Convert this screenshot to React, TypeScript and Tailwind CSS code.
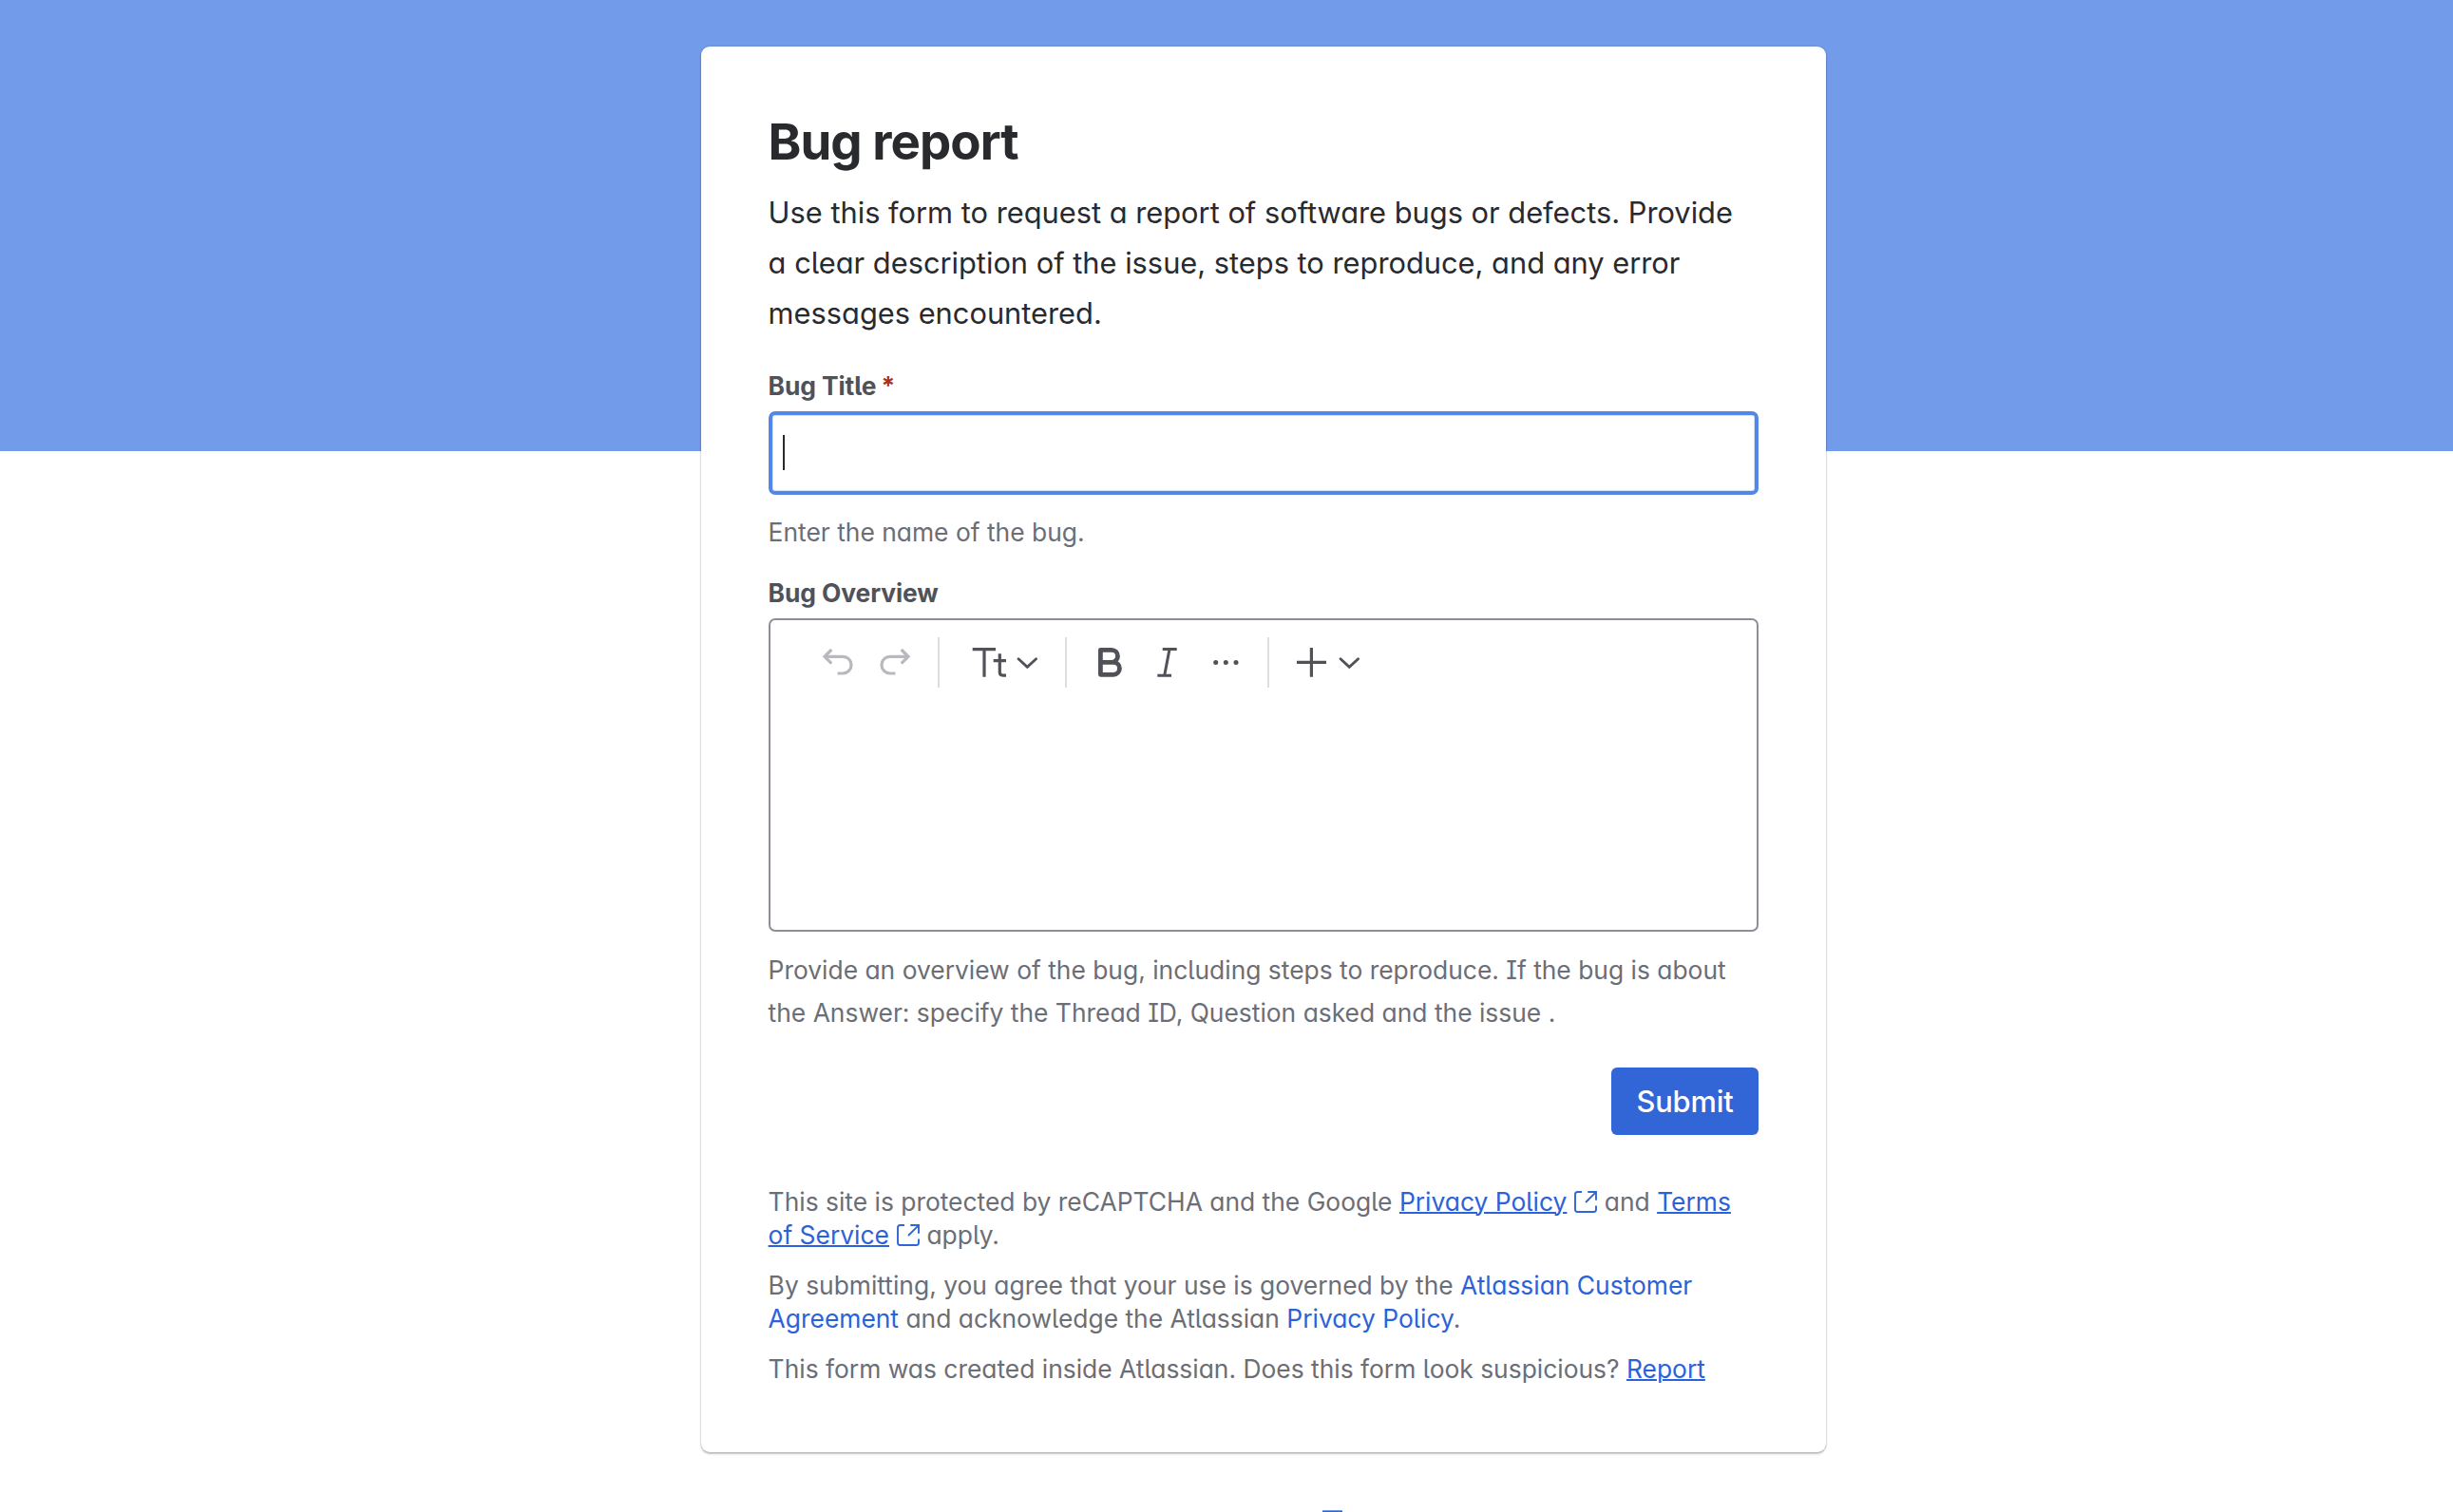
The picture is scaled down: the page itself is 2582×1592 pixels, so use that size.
import React from "react";

const ExternalIcon = () => (
  <svg viewBox="0 0 24 23" className="ml-[8px] inline-block h-[23px] w-[24px] align-[-2px]" fill="none" stroke="#2f65d6" strokeWidth="1.9">
    <path d="M8 1H3.5Q1 1 1 3.5V19.5Q1 22 3.5 22H20.5Q23 22 23 19.5V15.5M14.3 1H23V9.7M22.7 1.3L12 12" />
  </svg>
);

const Divider = () => <div className="h-[53px] w-[2px] shrink-0 bg-[#dddee1]" />;

const Chevron = () => (
  <svg viewBox="0 0 24 53" className="h-[53px] w-[24px]" fill="none" stroke="#505258" strokeWidth="2.8" strokeLinecap="round">
    <path d="M3 22.8L12.3 31.4L21.6 22.8" />
  </svg>
);

const Arrow = () => (
  <path d="M11.3 13L4 20.3L11.3 27.6M4 20.3H23.2A8.85 8.85 0 0 1 23.2 38H17.5" />
);

function Toolbar() {
  return (
    <div className="mt-[18px] flex h-[53px] items-center">
      <svg viewBox="0 0 36 53" className="ml-[53px] h-[53px] w-[36px]" fill="none" stroke="#b7b9be" strokeWidth="3.2">
        <Arrow />
      </svg>
      <svg viewBox="0 0 36 53" className="mr-[27px] ml-[24px] h-[53px] w-[36px] -scale-x-100" fill="none" stroke="#b7b9be" strokeWidth="3.2">
        <Arrow />
      </svg>
      <Divider />
      <svg viewBox="0 0 40 53" className="mr-[8px] ml-[32px] h-[53px] w-[40px]" fill="none" stroke="#505258" strokeWidth="3.2">
        <path d="M2.7 12.6H27M15 12.6V41.7M31.3 17.3V36.8Q31.3 40.1 34.6 40.1H38M24.7 24.7H38" />
      </svg>
      <Chevron />
      <div className="w-[28px]" />
      <Divider />
      <svg viewBox="0 0 30 53" className="ml-[31px] h-[53px] w-[30px]" fill="none" stroke="#505258" strokeWidth="4.8" strokeLinejoin="round">
        <path d="M4.4 26.4H16A6.5 6.5 0 0 0 16 13.4H4.4V39.3H18A6.45 6.45 0 0 0 18 26.4H16" />
      </svg>
      <svg viewBox="0 0 25 53" className="ml-[32px] h-[53px] w-[25px]" fill="none" stroke="#505258" strokeWidth="3">
        <path d="M7.7 12.6H22.7M2.3 40.2H17M15 12.6L9.7 40.2" />
      </svg>
      <svg viewBox="0 0 31 53" className="mr-[28px] ml-[34px] h-[53px] w-[31px]" fill="#505258">
        <circle cx="4.7" cy="26.4" r="2.5" />
        <circle cx="15.3" cy="26.4" r="2.5" />
        <circle cx="26" cy="26.4" r="2.5" />
      </svg>
      <Divider />
      <svg viewBox="0 0 36 53" className="mr-[9px] ml-[27px] h-[53px] w-[36px]" fill="none" stroke="#505258" strokeWidth="3.2">
        <path d="M2 26.4H33M17.4 11V41.8" />
      </svg>
      <Chevron />
    </div>
  );
}

export default function App() {
  return (
    <div className="h-[1592px] w-[2582px] overflow-hidden bg-white bg-[linear-gradient(#729bea,#729bea)] bg-[length:100%_475px] bg-no-repeat pt-[49px] font-[Inter,sans-serif] text-[26.4px] text-[#6b6e76] [font-feature-settings:'cv11','cv08','cv05']">
      <main className="ml-[738px] h-[1480px] w-[1184px] rounded-[9px] bg-white px-[71px] pt-[69px] shadow-[0_2px_2px_rgba(30,31,33,0.25),0_0_2px_rgba(30,31,33,0.31)] [&_h1]:-ml-[0.6px] [&_label]:-ml-[0.4px] [&_p]:-ml-[0.4px]">
        <h1 className="text-[52.8px] leading-[62px] font-bold tracking-[-0.95px] whitespace-nowrap text-[#292a2e]">Bug report</h1>
        <p className="mt-[17px] text-[30.8px] leading-[53px] whitespace-nowrap text-[#292a2e]">
          Use this form to request a report of software bugs or defects. Provide<br />
          a clear description of the issue, steps to reproduce, and any error<br />
          messages encountered.
        </p>
        <label className="mt-[33px] block leading-[35px] font-bold tracking-[-0.1px] text-[#505258]">
          Bug Title<span className="ml-[5px] text-[#a8321f]">*</span>
        </label>
        <div className="mt-[9px] flex h-[88px] items-center rounded-[7px] border-[4px] border-[#5486e8] pl-[11px] shadow-[inset_0_0_0_1px_#d5e3fb]">
          <div className="mb-px h-[37px] w-[2px] bg-[#292a2e]" />
        </div>
        <p className="mt-[17px] leading-[45px]">Enter the name of the bug.</p>
        <label className="mt-[24px] block leading-[35px] font-bold tracking-[-0.1px] text-[#505258]">Bug Overview</label>
        <div className="mt-[9px] h-[330px] rounded-[7px] border-[2px] border-[#8c8f97]">
          <Toolbar />
        </div>
        <p className="mt-[18px] leading-[45px] whitespace-nowrap">
          Provide an overview of the bug, including steps to reproduce. If the bug is about<br />
          the Answer: specify the Thread ID, Question asked and the issue .
        </p>
        <div className="mt-[35px] flex justify-end">
          <button className="h-[71px] w-[155px] rounded-[6px] bg-[#3266d6] pt-px text-[30.8px] font-[540] tracking-[-0.15px] text-white">Submit</button>
        </div>
        <div className="mt-[53px] leading-[35px] whitespace-nowrap [&_a]:text-[#2c62d8] [&_a]:decoration-2">
          <p>
            This site is protected by reCAPTCHA and the Google <a className="underline">Privacy Policy</a><ExternalIcon /> and <a className="underline">Terms</a><br />
            <a className="underline">of Service</a><ExternalIcon /> apply.
          </p>
          <p className="mt-[18px]">
            By submitting, you agree that your use is governed by the <a>Atlassian Customer</a><br />
            <a>Agreement</a> and acknowledge the Atlassian <a>Privacy Policy</a>.
          </p>
          <p className="mt-[18px]">This form was created inside Atlassian. Does this form look suspicious? <a className="underline">Report</a></p>
        </div>
      </main>
      <div className="mt-[61px] ml-[1392px] h-[8px] w-[21px] rounded-t-[1px] border-t border-[#6f96e6] bg-[#3266d6]" />
    </div>
  );
}
